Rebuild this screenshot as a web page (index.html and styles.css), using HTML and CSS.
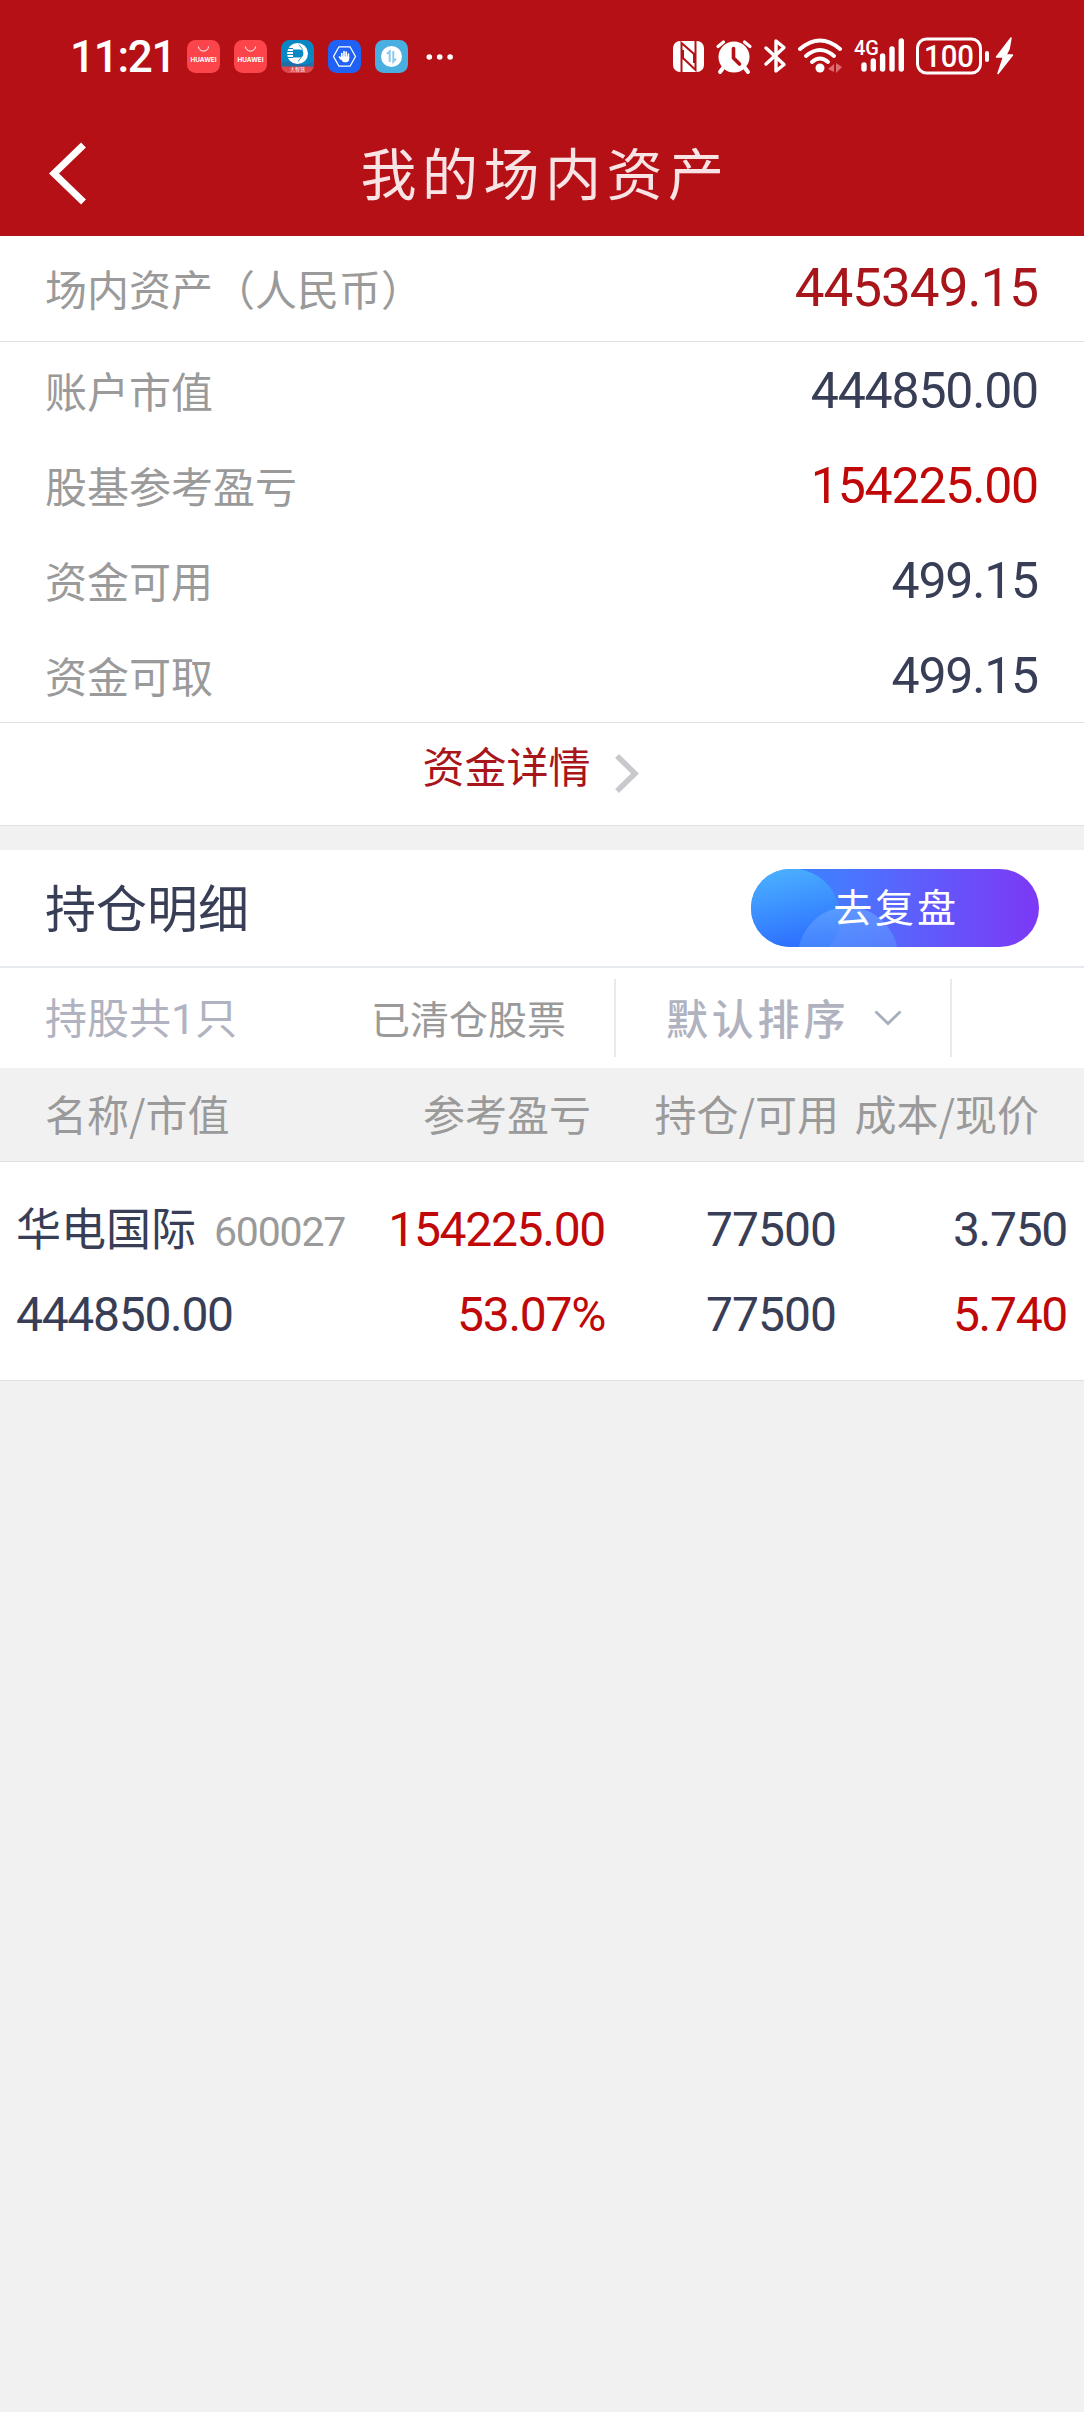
FILE: index.html
```html
<!DOCTYPE html>
<html lang="zh-CN">
<head>
  <meta charset="UTF-8" />
  <meta name="viewport" content="width=device-width, initial-scale=1, user-scalable=no" />
  <title>我的场内资产</title>
  <link rel="stylesheet" href="styles.css">
</head>
<body>
  <header class="header">
    <div class="status-bar">
      <div class="status-left">
        <span class="time">11:21</span>
        <svg class="app-icon" viewBox="0 0 33 33">
          <rect width="33" height="33" rx="8.5" fill="#fb454a" />
          <path d="M11.5 6.5a5 4.6 0 0 0 10 0" fill="none" stroke="#fff" stroke-width="1" />
          <text class="huawei" x="16.5" y="21.5" textLength="26" lengthAdjust="spacingAndGlyphs">HUAWEI</text>
        </svg>
        <svg class="app-icon" viewBox="0 0 33 33">
          <rect width="33" height="33" rx="8.5" fill="#fb454a" />
          <path d="M11.5 6.5a5 4.6 0 0 0 10 0" fill="none" stroke="#fff" stroke-width="1" />
          <text class="huawei" x="16.5" y="21.5" textLength="26" lengthAdjust="spacingAndGlyphs">HUAWEI</text>
        </svg>
        <svg class="app-icon" viewBox="0 0 33 33">
          <rect width="33" height="33" rx="8.5" fill="#0788c5" />
          <path d="M1 22q8-2 15 1t16-1v5H1z" fill="#1e6fa8" />
          <path d="M.3 26.5h32.4Q31.5 33 24.5 33h-16Q1.500 33 .3 26.500z" fill="#e0454b" />
          <circle cx="16.5" cy="13.5" r="10.5" fill="#fff" />
          <path d="M12 9.500h5.500a4 4 0 0 1 1.500 8h-7z" fill="#0788c5" />
          <path d="M5 8.500h7M5 11.500h7M5 14.500h7M5 17.500h7" stroke="#0788c5" stroke-width="1" />
          <path d="M18 4.500q8 8-1 17" fill="none" stroke="#0788c5" stroke-width=".8" />
          <text class="tiny" x="16.5" y="31.3">大智慧</text>
        </svg>
        <svg class="app-icon" viewBox="0 0 33 33">
          <rect width="33" height="33" rx="8.5" fill="#1f62f5" />
          <path d="M11 6.800h11l5.500 9.700-5.500 9.700H11L5.500 16.500z" fill="none" stroke="#fff" stroke-width="1.300" stroke-linejoin="round" />
          <path d="M13.800 18v-4.500M16 17v-5.300M18.200 17v-5M20.400 18v-3.800M13 19l-1.500-2" stroke="#fff" stroke-width="1.700" stroke-linecap="round" />
          <path d="M13 16.500h8.200v2.300q0 3.400-3.200 3.400h-1.500q-2 0-3.500-3z" fill="#fff" />
        </svg>
        <svg class="app-icon" viewBox="0 0 33 33">
          <rect width="33" height="33" rx="8.5" fill="#49afe0" />
          <circle cx="16.5" cy="16.5" r="10.5" fill="#fff" />
          <path d="M12 14l2.700-2.700V22M18.300 11v10.500l2.700-2.700" fill="none" stroke="#8dcbea" stroke-width="2" />
        </svg>
        <svg class="more" viewBox="0 0 28 6">
          <circle cx="3.300" cy="3" r="2.800" /><circle cx="13.700" cy="3" r="2.800" /><circle cx="24.100" cy="3" r="2.800" />
        </svg>
      </div>

      <!-- nfc, alarm, bluetooth, wifi, signal, battery -->
      <svg class="status-right" viewBox="0 0 346 40" fill="#fff">
        <rect x="0" y="4" width="31" height="31" rx="7" />
        <path d="M8.500 35V6l12.500 11v9M22.500 4v29L10 21v-8" fill="none" stroke="#b51015" stroke-width="2" />

        <g transform="translate(43 3)">
          <circle cx="18" cy="17" r="15.5" />
          <path d="M7 28l-3 4M29 28l3 4" stroke="#fff" stroke-width="4" stroke-linecap="round" />
          <path d="M2 6.500L7.500 2M34 6.500L28.500 2" stroke="#fff" stroke-width="3.200" stroke-linecap="round" />
          <path d="M17.500 8.500v9.500l6 6" fill="none" stroke="#b51015" stroke-width="3.600" stroke-linecap="round" stroke-linejoin="round" />
        </g>

        <path d="M93 11l18 16.500-8 6.500V4l8 6.500L93 27" fill="none" stroke="#fff" stroke-width="3.400" stroke-linecap="round" stroke-linejoin="round" />

        <g fill="none" stroke="#fff" stroke-width="4" stroke-linecap="round">
          <path d="M127 12q20-17 40 0" />
          <path d="M133 19q14-12 28 0" />
          <path d="M139 25q8-7 16 0" />
        </g>
        <circle cx="147" cy="31" r="4.500" />
        <path d="M155 32l6-5v8zM169 30l-6-4v10z" fill="#dc6b70" />

        <text class="net" x="181" y="18" textLength="25" lengthAdjust="spacingAndGlyphs">4G</text>
        <g stroke="#fff" stroke-width="5.400" stroke-linecap="round">
          <path d="M191 28v4M200.300 24v8M209.600 19v13M219 12v20M228.300 4v28" />
        </g>

        <rect x="244.500" y="2" width="63" height="34" rx="9" fill="none" stroke="#fff" stroke-width="3" />
        <text class="level" x="276" y="30" textLength="50" lengthAdjust="spacingAndGlyphs">100</text>
        <rect x="312" y="14" width="4" height="11" rx="2" />
        <path d="M338 1l-14.500 19h7L325 36.500 339.500 18H333l3-6z" stroke="#fff" stroke-width="1.500" stroke-linejoin="round" />
      </svg>
    </div>

    <div class="nav-bar">
      <svg class="back" viewBox="0 0 37 63">
        <path d="M34.500 3L5 31.500 34.500 60" fill="none" stroke="#fff" stroke-width="7" />
      </svg>
      <h1>我的场内资产</h1>
    </div>
  </header>

  <section class="assets">
    <div class="row total">
      <span class="label">场内资产（人民币）</span>
      <span class="num">445349.15</span>
    </div>
    <div class="asset-list">
      <div class="row"><span class="label">账户市值</span><span class="num">444850.00</span></div>
      <div class="row"><span class="label">股基参考盈亏</span><span class="num up">154225.00</span></div>
      <div class="row"><span class="label">资金可用</span><span class="num">499.15</span></div>
      <div class="row"><span class="label">资金可取</span><span class="num">499.15</span></div>
    </div>
    <a class="detail-link">
      <span>资金详情</span>
      <svg viewBox="0 0 24 39"><path d="M2 2l18 17.500L2 37" fill="none" stroke="#c8c9cc" stroke-width="5.500" /></svg>
    </a>
  </section>

  <section class="holdings">
    <div class="holdings-title">
      <h2>持仓明细</h2>
      <button class="review-btn">
        <svg viewBox="0 0 288 78">
          <defs>
            <linearGradient id="pill" x1="0" x2="1">
              <stop offset="0" stop-color="#2f83ff" />
              <stop offset=".3" stop-color="#467aff" />
              <stop offset=".6" stop-color="#5f5cfb" />
              <stop offset="1" stop-color="#7d38f6" />
            </linearGradient>
            <linearGradient id="big" x1="0" x2=".25" y1="0" y2="1">
              <stop offset="0" stop-color="#4db5ff" />
              <stop offset="1" stop-color="#2e73ff" />
            </linearGradient>
            <linearGradient id="small" x1="0" x2="0" y1="0" y2="1">
              <stop offset="0" stop-color="#6aa8ff" stop-opacity=".65" />
              <stop offset="1" stop-color="#4a80ff" stop-opacity=".15" />
            </linearGradient>
            <clipPath id="shape"><rect width="288" height="78" rx="39" /></clipPath>
          </defs>
          <g clip-path="url(#shape)">
            <rect width="288" height="78" fill="url(#pill)" />
            <path d="M0 0h34a48 48 0 0 1 44 78H0z" fill="url(#big)" />
            <circle cx="97" cy="88" r="50" fill="url(#small)" />
          </g>
        </svg>
        <span>去复盘</span>
      </button>
    </div>

    <div class="filter-bar">
      <span class="count">持股共<span class="count-num">1</span>只</span>
      <span class="cleared">已清仓股票</span>
      <div class="sort">
        <span>默认排序</span>
        <svg viewBox="0 0 28 16"><path d="M1.500 1.500L14 13.500 26.500 1.500" fill="none" stroke="#a6afbd" stroke-width="2.800" /></svg>
      </div>
    </div>

    <div class="table-head">
      <span>名称/市值</span>
      <span>参考盈亏</span>
      <span>持仓/可用</span>
      <span>成本/现价</span>
    </div>

    <div class="stock">
      <div class="stock-line">
        <span class="name">华电国际<span class="code">600027</span></span>
        <span class="tight up">154225.00</span>
        <span>77500</span>
        <span class="tight">3.750</span>
      </div>
      <div class="stock-line">
        <span class="tight">444850.00</span>
        <span class="tight up">53.07%</span>
        <span>77500</span>
        <span class="tight up">5.740</span>
      </div>
    </div>
  </section>
</body>
</html>
```
FILE: styles.css
```css
* {
  box-sizing: border-box;
}
body {
  margin: 0;
  background: #f1f1f1;
  color: #383e56;
  font-family: "Noto Sans CJK SC", sans-serif;
  font-size: 42px;
}
h1, h2 {
  margin: 0;
  font-weight: 400;
}
svg {
  display: block;
  flex: none;
}

/* header */
.header {
  height: 236px;
  background: #b51015;
  color: #fff;
}
.status-bar {
  display: flex;
  justify-content: space-between;
  height: 110px;
  padding: 37px 65px 0 70px;
}
.status-left {
  display: flex;
  align-items: center;
  gap: 14px;
  height: 39px;
}
.time {
  width: 103px;
  padding-top: 2px;
  font: 500 44px/39px Roboto, sans-serif;
  letter-spacing: -1.300px;
  white-space: nowrap;
}
.app-icon {
  width: 33px;
  height: 33px;
}
.huawei {
  fill: #fff;
  font: 700 6px Inter, sans-serif;
  text-anchor: middle;
}
.tiny {
  fill: #fff;
  font-size: 5px;
  text-anchor: middle;
}
.more {
  width: 28px;
  height: 6px;
  margin-left: 4px;
  fill: #fff;
}
.status-right {
  width: 346px;
  height: 40px;
}
.net {
  font: 500 21px Roboto, sans-serif;
}
.level {
  font: 500 32px Roboto, sans-serif;
  text-anchor: middle;
}
.nav-bar {
  display: grid;
  grid-template-columns: 86px 1fr 86px;
  align-items: center;
  height: 126px;
}
.back {
  width: 37px;
  height: 63px;
  margin-left: 49px;
}
.nav-bar h1 {
  padding: 0 0 5px 6px;
  color: #f8e3e5;
  font-size: 56px;
  line-height: 80px;
  letter-spacing: 5.500px;
  text-align: center;
}

/* assets */
.assets {
  height: 590px;
  background: #fff;
  border-bottom: 1px solid #e0e0e0;
}
.row {
  display: flex;
  justify-content: space-between;
  align-items: center;
  height: 95px;
  padding: 0 46px 0 45px;
}
.label {
  color: #9a9a9a;
  line-height: 60px;
}
.num {
  padding-top: 3px;
  font-family: Roboto, sans-serif;
  font-size: 50px;
  line-height: 60px;
  letter-spacing: -1.200px;
}
.up {
  color: #c00808;
}
.total {
  height: 106px;
  padding-bottom: 2px;
  border-bottom: 1px solid #e0e0e0;
}
.total .num {
  padding-top: 0;
  color: #a8151b;
  font-size: 53px;
  letter-spacing: -1px;
}
.detail-link {
  display: flex;
  justify-content: center;
  height: 103px;
  padding: 12px 23px 0 0;
  border-top: 1px solid #e0e0e0;
  color: #a8151b;
  line-height: 60px;
}
.detail-link svg {
  width: 24px;
  height: 39px;
  margin: 19px 0 0 24px;
}

/* holdings */
.holdings {
  margin-top: 24px;
  background: #fff;
}
.holdings-title {
  display: flex;
  justify-content: space-between;
  align-items: center;
  height: 118px;
  padding: 0 45px;
  border-bottom: 2px solid #e6eaee;
}
.holdings-title h2 {
  padding-bottom: 4px;
  font-size: 51px;
  line-height: 70px;
}
.review-btn {
  display: grid;
  width: 288px;
  height: 78px;
  padding: 0;
  border: none;
  background: none;
  color: #fff;
  font-family: inherit;
  font-size: 39px;
  line-height: 73px;
  letter-spacing: 2.800px;
}
.review-btn svg, .review-btn span {
  grid-area: 1 / 1;
}
.review-btn span {
  padding-left: 2px;
}
.filter-bar {
  display: flex;
  align-items: center;
  height: 100px;
  padding-left: 45px;
  line-height: 60px;
}
.count {
  width: 326px;
  padding-bottom: 1px;
  color: #b0b3bf;
}
.count-num {
  font-family: Roboto, sans-serif;
  font-size: 43px;
}
.cleared {
  width: 243px;
  padding-bottom: 3px;
  color: #9a9a9a;
  font-size: 39px;
}
.sort {
  display: flex;
  align-items: center;
  gap: 25px;
  width: 338px;
  height: 78px;
  padding: 0 0 3px 50px;
  border: solid #e6eaee;
  border-width: 0 2px;
  color: #b0b3bf;
  font-weight: 500;
  letter-spacing: 3.800px;
}
.sort svg {
  width: 28px;
  height: 16px;
  margin-top: 3px;
}
.table-head {
  display: grid;
  grid-template-columns: 296px 250px 248px 1fr;
  height: 94px;
  padding: 0 45px;
  border-bottom: 1px solid #e0e0e0;
  background: #f1f1f1;
  color: #9a9a9a;
  line-height: 90px;
  text-align: right;
}
.table-head span:first-child {
  text-align: left;
}
.stock {
  height: 219px;
  padding: 25px 17px 0 16px;
  border-bottom: 1px solid #e0e0e0;
}
.stock-line {
  display: grid;
  grid-template-columns: 349px 240px 231px 1fr;
  height: 85px;
  font: 48px/86px Roboto, sans-serif;
  letter-spacing: -1px;
  text-align: right;
}
.stock-line > span:first-child {
  text-align: left;
}
.stock-line .tight {
  letter-spacing: -1.300px;
}
.stock-line .name {
  font-family: "Noto Sans CJK SC", sans-serif;
  font-size: 45px;
  line-height: 80px;
  letter-spacing: 0;
  white-space: nowrap;
}
.code {
  margin-left: 18px;
  color: #9a9a9a;
  font-family: Roboto, sans-serif;
  font-size: 41px;
  letter-spacing: -1.200px;
}
```
